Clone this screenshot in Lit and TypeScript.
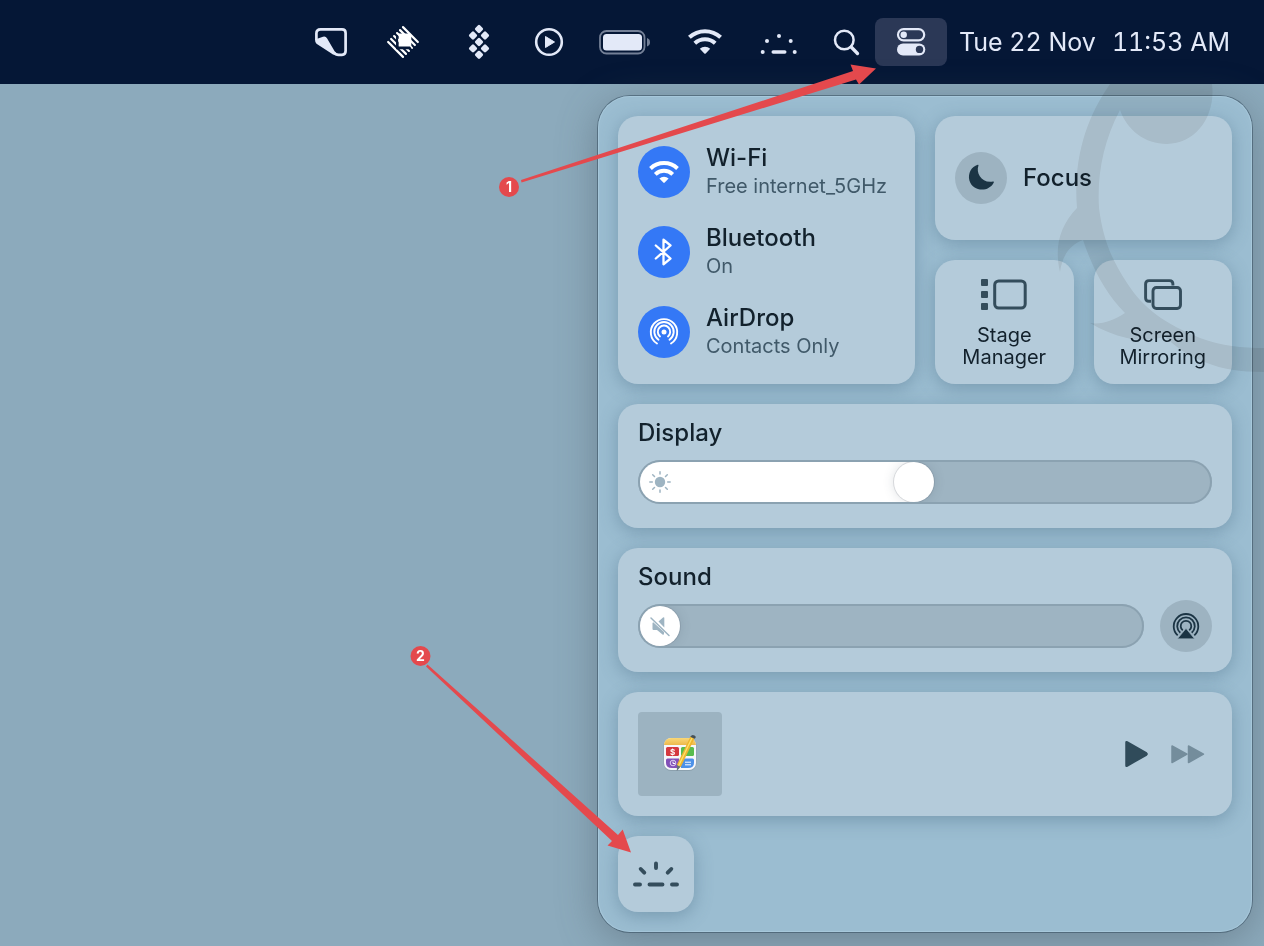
import { LitElement, html, svg, css } from "lit";
import { customElement, property, state } from "lit/decorators.js";

const ICONS: Record<string, { w: number; h: number; body: unknown }> = {
  note: {
    w: 48, h: 36,
    body: svg`<path d="M9.400 16V9.500Q9.400 5.300 13.600 5.300H35Q38.600 5.300 38.600 9V27Q38.600 30.800 35 30.800H31.500Q28.600 30.800 26.800 28.200" fill="none" stroke="currentColor" stroke-width="2.700"/>
      <path d="M8 15.500 16 12.800Q18.600 12 20 14.300L29.500 30.500Q26.500 31.500 24.500 29.500L9.500 19.800Q8 18.500 8 15.500Z" fill="currentColor"/>`,
  },
  hatch: {
    w: 48, h: 36,
    body: svg`<g transform="translate(24 18) rotate(45)" stroke="#fff" stroke-width="2.200" stroke-linecap="round">
        <path d="M-10.500-10.500H10.500M-10.500-6.300H10.500M-10.500-2.100H10.500M-10.500 2.100H10.500M-10.500 6.300H10.500M-10.500 10.500H10.500"/></g>
      <path d="M17.800 11V24.500H31.500L30 22H19Z" fill="#051736" stroke="#051736" stroke-width="1.500"/><path d="M19.700 9.500H31L32.300 11V22.500H19.700Z" fill="#fff"/>`,
  },
  diamonds: {
    w: 56, h: 36,
    body: [[28, 5], [22, 11.5], [34, 11.5], [28, 18], [22, 24.4], [34, 24.4], [28, 30.8]].map(
      ([x, y]) => svg`<rect x=${x - 3.3} y=${y - 3.3} width="6.600" height="6.600" rx="1.400" transform="rotate(45 ${x} ${y})" fill="currentColor"/>`),
  },
  playCircle: {
    w: 36, h: 36,
    body: svg`<circle cx="18" cy="18" r="12.800" fill="none" stroke="currentColor" stroke-width="2.600"/>
      <path d="M14.500 12.500V23.500L23.500 18Z" fill="currentColor" stroke="currentColor" stroke-linejoin="round"/>`,
  },
  battery: {
    w: 66, h: 36,
    body: svg`<rect x="9" y="7" width="44.500" height="22.500" rx="6.500" fill="none" stroke="currentColor" stroke-width="1.800" opacity=".5"/>
      <rect x="12" y="10" width="39" height="16.500" rx="3.500" fill="currentColor"/>
      <path d="M56 14Q59 15 59 18.200T56 22.500Z" fill="currentColor" opacity=".5"/>`,
  },
  wifi: {
    w: 48, h: 36,
    body: svg`<g fill="none" stroke="currentColor" stroke-width="4"><path d="M8.400 13.300A22.800 22.800 0 0 1 39.600 13.300"/><path d="M13.800 19.300A15 15 0 0 1 34.200 19.300"/></g>
      <path d="M18.800 24.800A7.500 7.500 0 0 1 29.200 24.800L24.700 29.500Q24 30.100 23.300 29.500Z" fill="currentColor"/>`,
  },
  keyGlowSmall: {
    w: 52, h: 36,
    body: svg`<g fill="currentColor"><circle cx="26" cy="12" r="2"/><circle cx="14" cy="17" r="2"/><circle cx="37.700" cy="17" r="2"/><circle cx="9.700" cy="28" r="2"/><circle cx="41.700" cy="28" r="2"/><rect x="18.500" y="26.300" width="15" height="3.500" rx="1.700"/></g>`,
  },
  search: {
    w: 34, h: 36,
    body: svg`<circle cx="15.300" cy="16" r="9.300" fill="none" stroke="currentColor" stroke-width="2.500"/><path d="M22.200 23 28.500 29.500" stroke="currentColor" stroke-width="3.300" stroke-linecap="round"/>`,
  },
  toggles: {
    w: 30, h: 30,
    body: svg`<rect x="2" y="2.200" width="26.200" height="11.200" rx="5.600" fill="none" stroke="currentColor" stroke-width="2.200"/><circle cx="7.700" cy="7.800" r="3.200" fill="currentColor"/>
      <rect x="1" y="16.500" width="28.300" height="12" rx="6" fill="currentColor"/><circle cx="23.500" cy="22.400" r="3.700" fill="#2b3856"/>`,
  },
  bluetooth: {
    w: 52, h: 52,
    body: svg`<path d="M17.800 19.500 32.500 32.500 25.500 38.300V13.700L32.500 19.500 17.800 32.500" fill="none" stroke="currentColor" stroke-width="2.300" stroke-linejoin="round" stroke-linecap="round"/>`,
  },
  wifiDisc: {
    w: 52, h: 52,
    body: svg`<g fill="none" stroke="currentColor" stroke-width="3.900"><path d="M12.500 22.500A19.500 19.500 0 0 1 39.500 22.500"/><path d="M17.300 28.300A12.500 12.500 0 0 1 34.700 28.300"/></g>
      <path d="M21.400 32.600A6.500 6.500 0 0 1 30.600 32.600L26.700 36.600Q26 37.200 25.300 36.600Z" fill="currentColor"/>`,
  },
  airdrop: {
    w: 52, h: 52,
    body: svg`<g fill="none" stroke="currentColor" stroke-width="1.900" stroke-linecap="round"><path d="M19 37.500A13.200 13.200 0 1 1 33 37.500"/><path d="M20.500 33.700A9.700 9.700 0 1 1 31.500 33.700"/><path d="M22 30.500A6.200 6.200 0 1 1 30 30.500"/></g><circle cx="26" cy="26" r="2.500" fill="currentColor"/>`,
  },
  airplay: {
    w: 52, h: 52,
    body: svg`<g fill="none" stroke="currentColor" stroke-width="1.800"><path d="M17.700 35.400A12.300 12.300 0 1 1 34.300 35.400"/><path d="M20.300 32.800A8.800 8.800 0 1 1 31.700 32.800"/><path d="M22.800 30.300A5.300 5.300 0 1 1 29.200 30.300"/></g><path d="M26 28.500 34.500 38.800H17.500Z" fill="currentColor" stroke="#9db3c1" stroke-width=".6"/>`,
  },
  moon: {
    w: 52, h: 52,
    body: svg`<path d="M23.500 13.200C20.500 21.500 27 31.500 38 29.500Q39.200 29.300 38.800 30.500C33.500 41 17.500 39.500 14.400 28.500C12.700 21.500 16.500 14.500 22.700 12.800Q23.800 12.600 23.500 13.200Z" fill="currentColor"/>`,
  },
  stage: {
    w: 48, h: 32,
    body: svg`<g fill="currentColor"><rect x="1" y="1" width="7" height="7" rx="1"/><rect x="1" y="13" width="7" height="7" rx="1"/><rect x="1" y="25" width="7" height="7" rx="1"/></g><rect x="14.700" y="3" width="30.500" height="27" rx="4" fill="none" stroke="currentColor" stroke-width="3"/>`,
  },
  mirror: {
    w: 40, h: 32,
    body: svg`<path d="M8 23.300H6Q2.600 23.300 2.600 20V6Q2.600 2.600 6 2.600H26.500Q29.900 2.600 29.900 6V7.500" fill="none" stroke="currentColor" stroke-width="2.900"/><rect x="10" y="9.500" width="27.500" height="21" rx="3.400" fill="none" stroke="currentColor" stroke-width="2.900"/>`,
  },
  sun: {
    w: 24, h: 24,
    body: svg`<circle cx="12" cy="12" r="5.200" fill="currentColor"/><path d="M12 1.800V4M12 20V22.200M1.800 12H4.300M19.700 12H22.200M4.700 4.700 6.500 6.500M17.500 17.500 19.300 19.300M4.700 19.300 6.500 17.500M17.500 6.500 19.300 4.700" stroke="currentColor" stroke-width="1.500" stroke-linecap="round"/>`,
  },
  muted: {
    w: 24, h: 24,
    body: svg`<path d="M4.500 9V15Q4.500 16 5.500 16H9L14.500 20.500Q16 21.200 16 19.500V18L5.200 8.200Z" fill="currentColor"/><path d="M10.500 7.500 15 3.500Q16.300 2.700 16.300 4V13.500Z" fill="currentColor"/><path d="M3 4 21 21.500" stroke="currentColor" stroke-width="1.500" stroke-linecap="round"/>`,
  },
  play: {
    w: 28, h: 32,
    body: svg`<path d="M4 4.500V27.500Q4 28.700 5.200 28L24.500 17Q25.700 16 24.500 15L5.200 4Q4 3.300 4 4.500Z" fill="currentColor" stroke="currentColor" stroke-width="1.500" stroke-linejoin="round"/>`,
  },
  forward: {
    w: 36, h: 32,
    body: svg`<g fill="currentColor" stroke="currentColor" stroke-width="1.500" stroke-linejoin="round"><path d="M2 8V24.500L17 16.200Z"/><path d="M18.500 8V24.500L33.500 16.200Z"/></g>`,
  },
  keyGlow: {
    w: 48, h: 28,
    body: svg`<path d="M24 3.500V8M8.700 9 12.300 12.700M39.300 9 35.700 12.700M3 24.500H8M17.500 24.500H30.500M40 24.500H45" stroke="currentColor" stroke-width="3.900" stroke-linecap="round"/>`,
  },
};

function icon(name: string) {
  const { w, h, body } = ICONS[name];
  return html`<svg aria-hidden="true" width=${w} height=${h} viewBox="0 0 ${w} ${h}">${body}</svg>`;
}

@customElement("menu-bar")
class MenuBar extends LitElement {
  static styles = css`
    :host { display: block; background: #051736; color: #e3e9f8; }
    nav { display: flex; align-items: center; justify-content: flex-end; gap: 12px; height: 84px; padding-right: 34px; box-sizing: border-box; }
    .items { display: flex; gap: 24px; }
    button { display: flex; align-items: center; justify-content: center; padding: 0; border: 0; background: none; color: inherit; font: inherit; }
    svg { display: block; }
    .active { width: 72px; height: 48px; border-radius: 8px; background: #2b3856; }
    .clock { gap: 16px; font-size: 25px; line-height: 32px; white-space: nowrap; font-variant-numeric: tabular-nums; }
  `;
  render() {
    const items = [["note", "Notes"], ["hatch", "Window helper"], ["diamonds", "Tiles"], ["playCircle", "Now Playing"],
      ["battery", "Battery"], ["wifi", "Wi-Fi"], ["keyGlowSmall", "Keyboard Brightness"], ["search", "Spotlight"]];
    return html`<nav aria-label="Menu bar">
      <div class="items">${items.map(([n, l]) => html`<button aria-label=${l}>${icon(n)}</button>`)}</div>
      <button class="active" aria-label="Control Center" aria-expanded="true">${icon("toggles")}</button>
      <button class="clock"><span>Tue 22 Nov</span><span>11:53 AM</span></button>
    </nav>`;
  }
}

@customElement("level-slider")
class LevelSlider extends LitElement {
  @property() label = "";
  @property() glyph = "";
  @property({ type: Number }) value = 0;
  static styles = css`
    :host { display: block; }
    label { display: block; font-size: 24px; font-weight: 500; line-height: 26px; margin-bottom: 10px; }
    .row { display: flex; align-items: center; gap: 16px; min-height: 52px; }
    .track { position: relative; flex: 1; min-width: 0; display: flex; height: 44px; box-sizing: border-box; border-radius: 22px; background: #9eb4c2; padding: 2px; box-shadow: inset 0 0 0 2px #8ba2b1; }
    input { appearance: none; -webkit-appearance: none; width: 100%; height: 40px; margin: 0; border-radius: 20px; overflow: hidden;
      background: linear-gradient(to right, #fff var(--stop), transparent var(--stop)); }
    input::-webkit-slider-thumb { -webkit-appearance: none; width: 40px; height: 40px; border-radius: 50%; background: #fff; box-shadow: 0 0 0 1px rgba(80, 90, 100, 0.16), 0 0 12px rgba(60, 80, 95, 0.18); }
    svg { position: absolute; left: 10px; top: 10px; color: #9eb4c2; pointer-events: none; }
  `;
  private onInput(e: Event) {
    this.value = Number((e.target as HTMLInputElement).value);
  }
  render() {
    return html`<label for="level">${this.label}</label>
      <div class="row">
        <div class="track">
          <input id="level" type="range" min="0" max="100" .value=${String(this.value)} @input=${this.onInput}
            style="--stop: calc(20px + (100% - 40px) * ${this.value / 100})" />
          ${icon(this.glyph)}
        </div>
        <slot></slot>
      </div>`;
  }
}

@customElement("control-panel")
class ControlPanel extends LitElement {
  @state() private connections = [
    { name: "Wi-Fi", detail: "Free internet_5GHz", glyph: "wifiDisc" },
    { name: "Bluetooth", detail: "On", glyph: "bluetooth" },
    { name: "AirDrop", detail: "Contacts Only", glyph: "airdrop" },
  ];
  static styles = css`
    :host { display: grid; gap: 20px; box-sizing: border-box; width: 100%; max-width: 654px; padding: 20px; border-radius: 32px;
      background: #9bbdd1; color: #12212c;
      box-shadow: 0 0 0 1px rgba(45, 70, 88, 0.5), inset 0 0 0 1px rgba(180, 212, 230, 0.5), 0 8px 40px rgba(70, 85, 95, 0.45); }
    .top { display: grid; grid-template-columns: 1fr 1fr; gap: 20px; }
    .row { display: flex; align-items: center; gap: 16px; padding: 0; border: 0; background: none; color: inherit; font: inherit; text-align: left; }
    .card { box-sizing: border-box; border: 0; border-radius: 20px; background: #b4cbda; color: inherit; font: inherit; box-shadow: 0 4px 18px rgba(75, 110, 135, 0.45); }
    .links { display: flex; flex-direction: column; gap: 24px; padding: 28px 20px 24px; }
    .disc { flex: none; width: 52px; height: 52px; padding: 0; border: 0; border-radius: 50%; background: #9db3c1; color: #1b3444; }
    .on { background: #3478f6; color: #fff; }
    svg { display: block; }
    .title, .detail { display: block; line-height: 28px; white-space: nowrap; }
    .title { font-size: 24px; font-weight: 500; }
    .detail { font-size: 20px; color: #405969; }
    .side { display: grid; grid-template-columns: 1fr 1fr; grid-template-rows: 1fr 1fr; gap: 20px; }
    .focus { grid-column: 1 / -1; padding: 20px; }
    .tile { display: flex; flex-direction: column; align-items: center; gap: 14px; padding: 18px 8px 12px; }
    .tile span { font-size: 20px; line-height: 22px; max-width: 100px; }
    .tile svg, .keys svg { color: #344d5c; }
    .level { padding: 16px 20px 20px; }
    .media { display: flex; align-items: center; padding: 20px; }
    .art { width: 84px; height: 84px; border-radius: 4px; background: #9cb3c1; margin-right: auto; }
    .ctl { padding: 0; border: 0; background: none; color: #304b5a; }
    .next { margin: 0 6px 0 20px; color: #748d9c; }
    .keys { display: grid; place-items: center; width: 76px; height: 76px; padding: 0; }
  `;
  render() {
    return html`
      <div class="top">
        <div class="card links">
          ${this.connections.map((c) => html`<button class="row">
            <span class="disc on">${icon(c.glyph)}</span>
            <span><span class="title">${c.name}</span><span class="detail">${c.detail}</span></span>
          </button>`)}
        </div>
        <div class="side">
          <button class="row card focus"><span class="disc">${icon("moon")}</span><span class="title">Focus</span></button>
          <button class="card tile">${icon("stage")}<span>Stage Manager</span></button>
          <button class="card tile">${icon("mirror")}<span>Screen Mirroring</span></button>
        </div>
      </div>
      <div class="card level"><level-slider label="Display" glyph="sun" .value=${48}></level-slider></div>
      <div class="card level"><level-slider label="Sound" glyph="muted" .value=${0}>
        <button class="disc" aria-label="Sound output">${icon("airplay")}</button></level-slider></div>
      <div class="card media">
        <svg class="art" viewBox="0 0 84 84" aria-hidden="true">
          <defs><clipPath id="app"><rect x="26" y="26" width="32" height="32" rx="7"/></clipPath>
          <linearGradient id="gold" x2="0" y2="1"><stop stop-color="#f9d878"/><stop offset="1" stop-color="#edb84c"/></linearGradient></defs>
          <rect x="25.500" y="26" width="33" height="33" rx="7.500" fill="#8ba0ad"/>
          <g clip-path="url(#app)"><rect x="26" y="26" width="32" height="32" fill="#f6f7fa"/><rect x="26" y="26" width="32" height="7" fill="url(#gold)"/>
            <rect x="28" y="35" width="13" height="9" rx="1.500" fill="#d5383f"/><rect x="43" y="35" width="13" height="9" rx="1.500" fill="#58bc4d"/>
            <path d="M28 48Q28 46.500 29.500 46.500H41V56H34Q28 56 28 51Z" fill="#8250b7"/><path d="M43 46.500H54.500Q56 46.500 56 48V51Q56 56 50 56H43Z" fill="#4c91e8"/></g>
          <text x="34.500" y="42.500" text-anchor="middle" font-size="8" font-weight="700" fill="#fff">$</text>
          <circle cx="35" cy="51" r="2.800" fill="none" stroke="#eadcf7" stroke-width=".9"/><path d="M35 49.500V51.500H37M47 50.200H53M47 52.800H53" stroke="#fff" fill="none"/>
          <path d="M52.500 24.500 56.500 26.500 43 54.500 39 57.500 39 52.500Z" fill="#eeb52f"/><path d="M54 26 40.500 54" stroke="#ffe16c" stroke-width="1.300"/>
          <path d="M52.500 24.500Q54 22 56.500 23.500T56.500 26.800L52.200 24.800Z" fill="#465158"/><path d="M39 53 42.500 54.800 38.800 59Z" fill="#65727b"/>
        </svg>
        <button class="ctl" aria-label="Play">${icon("play")}</button>
        <button class="ctl next" aria-label="Next">${icon("forward")}</button>
      </div>
      <button class="card keys" aria-label="Keyboard Brightness">${icon("keyGlow")}</button>`;
  }
}

@customElement("app-root")
class AppRoot extends LitElement {
  static styles = css`
    :host { display: block; position: relative; overflow: hidden; box-sizing: border-box; min-height: 100vh; background: #8caabc; font-family: Inter, "Liberation Sans", sans-serif; }
    main { display: flex; justify-content: flex-end; padding: 12px 12px 14px; }
    .overlay { position: absolute; top: 0; right: 0; pointer-events: none; }
    .mascot { mix-blend-mode: multiply; }
    .num { font-size: 14px; font-weight: 700; fill: #fff; text-anchor: middle; }
  `;
  render() {
    return html`
      <menu-bar></menu-bar>
      <main><control-panel></control-panel></main>
      <svg class="overlay mascot" width="864" height="946" viewBox="400 0 864 946" aria-hidden="true">
        <path fill="#eeeceb" d="M1110 84H1212C1216 116 1196 144 1167 144C1145 144 1127 130 1120 110C1103 142 1097 175 1099 208C1103 240 1112 260 1127 283C1143 308 1165 324 1200 338C1222 346 1242 348 1264 348V372C1240 372 1222 369 1207 363C1190 357 1177 348 1165 337C1150 340 1138 341 1127 338C1114 335 1102 330 1090 323C1102 325 1114 320 1125 313C1107 295 1093 270 1083 240C1069 245 1062 257 1060 272C1054 246 1060 226 1077 208C1073 160 1086 118 1110 84Z"/>
      </svg>
      <svg class="overlay" width="864" height="946" viewBox="400 0 864 946">
        <g fill="#e4494d">
          <path d="M521 180 853 71 850.500 64.500 876 68.500 859 84.500 856 79.500 521.500 182.500Z"/>
          <path d="M427.500 664.500 618 835 622.700 829.500 631 852.500 607.500 845.500 612 841 426 666.500Z"/>
          <circle cx="509" cy="187" r="10"/><circle cx="420.500" cy="656" r="10"/>
        </g>
        <text class="num" x="509" y="192">1</text><text class="num" x="420.500" y="661">2</text>
      </svg>`;
  }
}
